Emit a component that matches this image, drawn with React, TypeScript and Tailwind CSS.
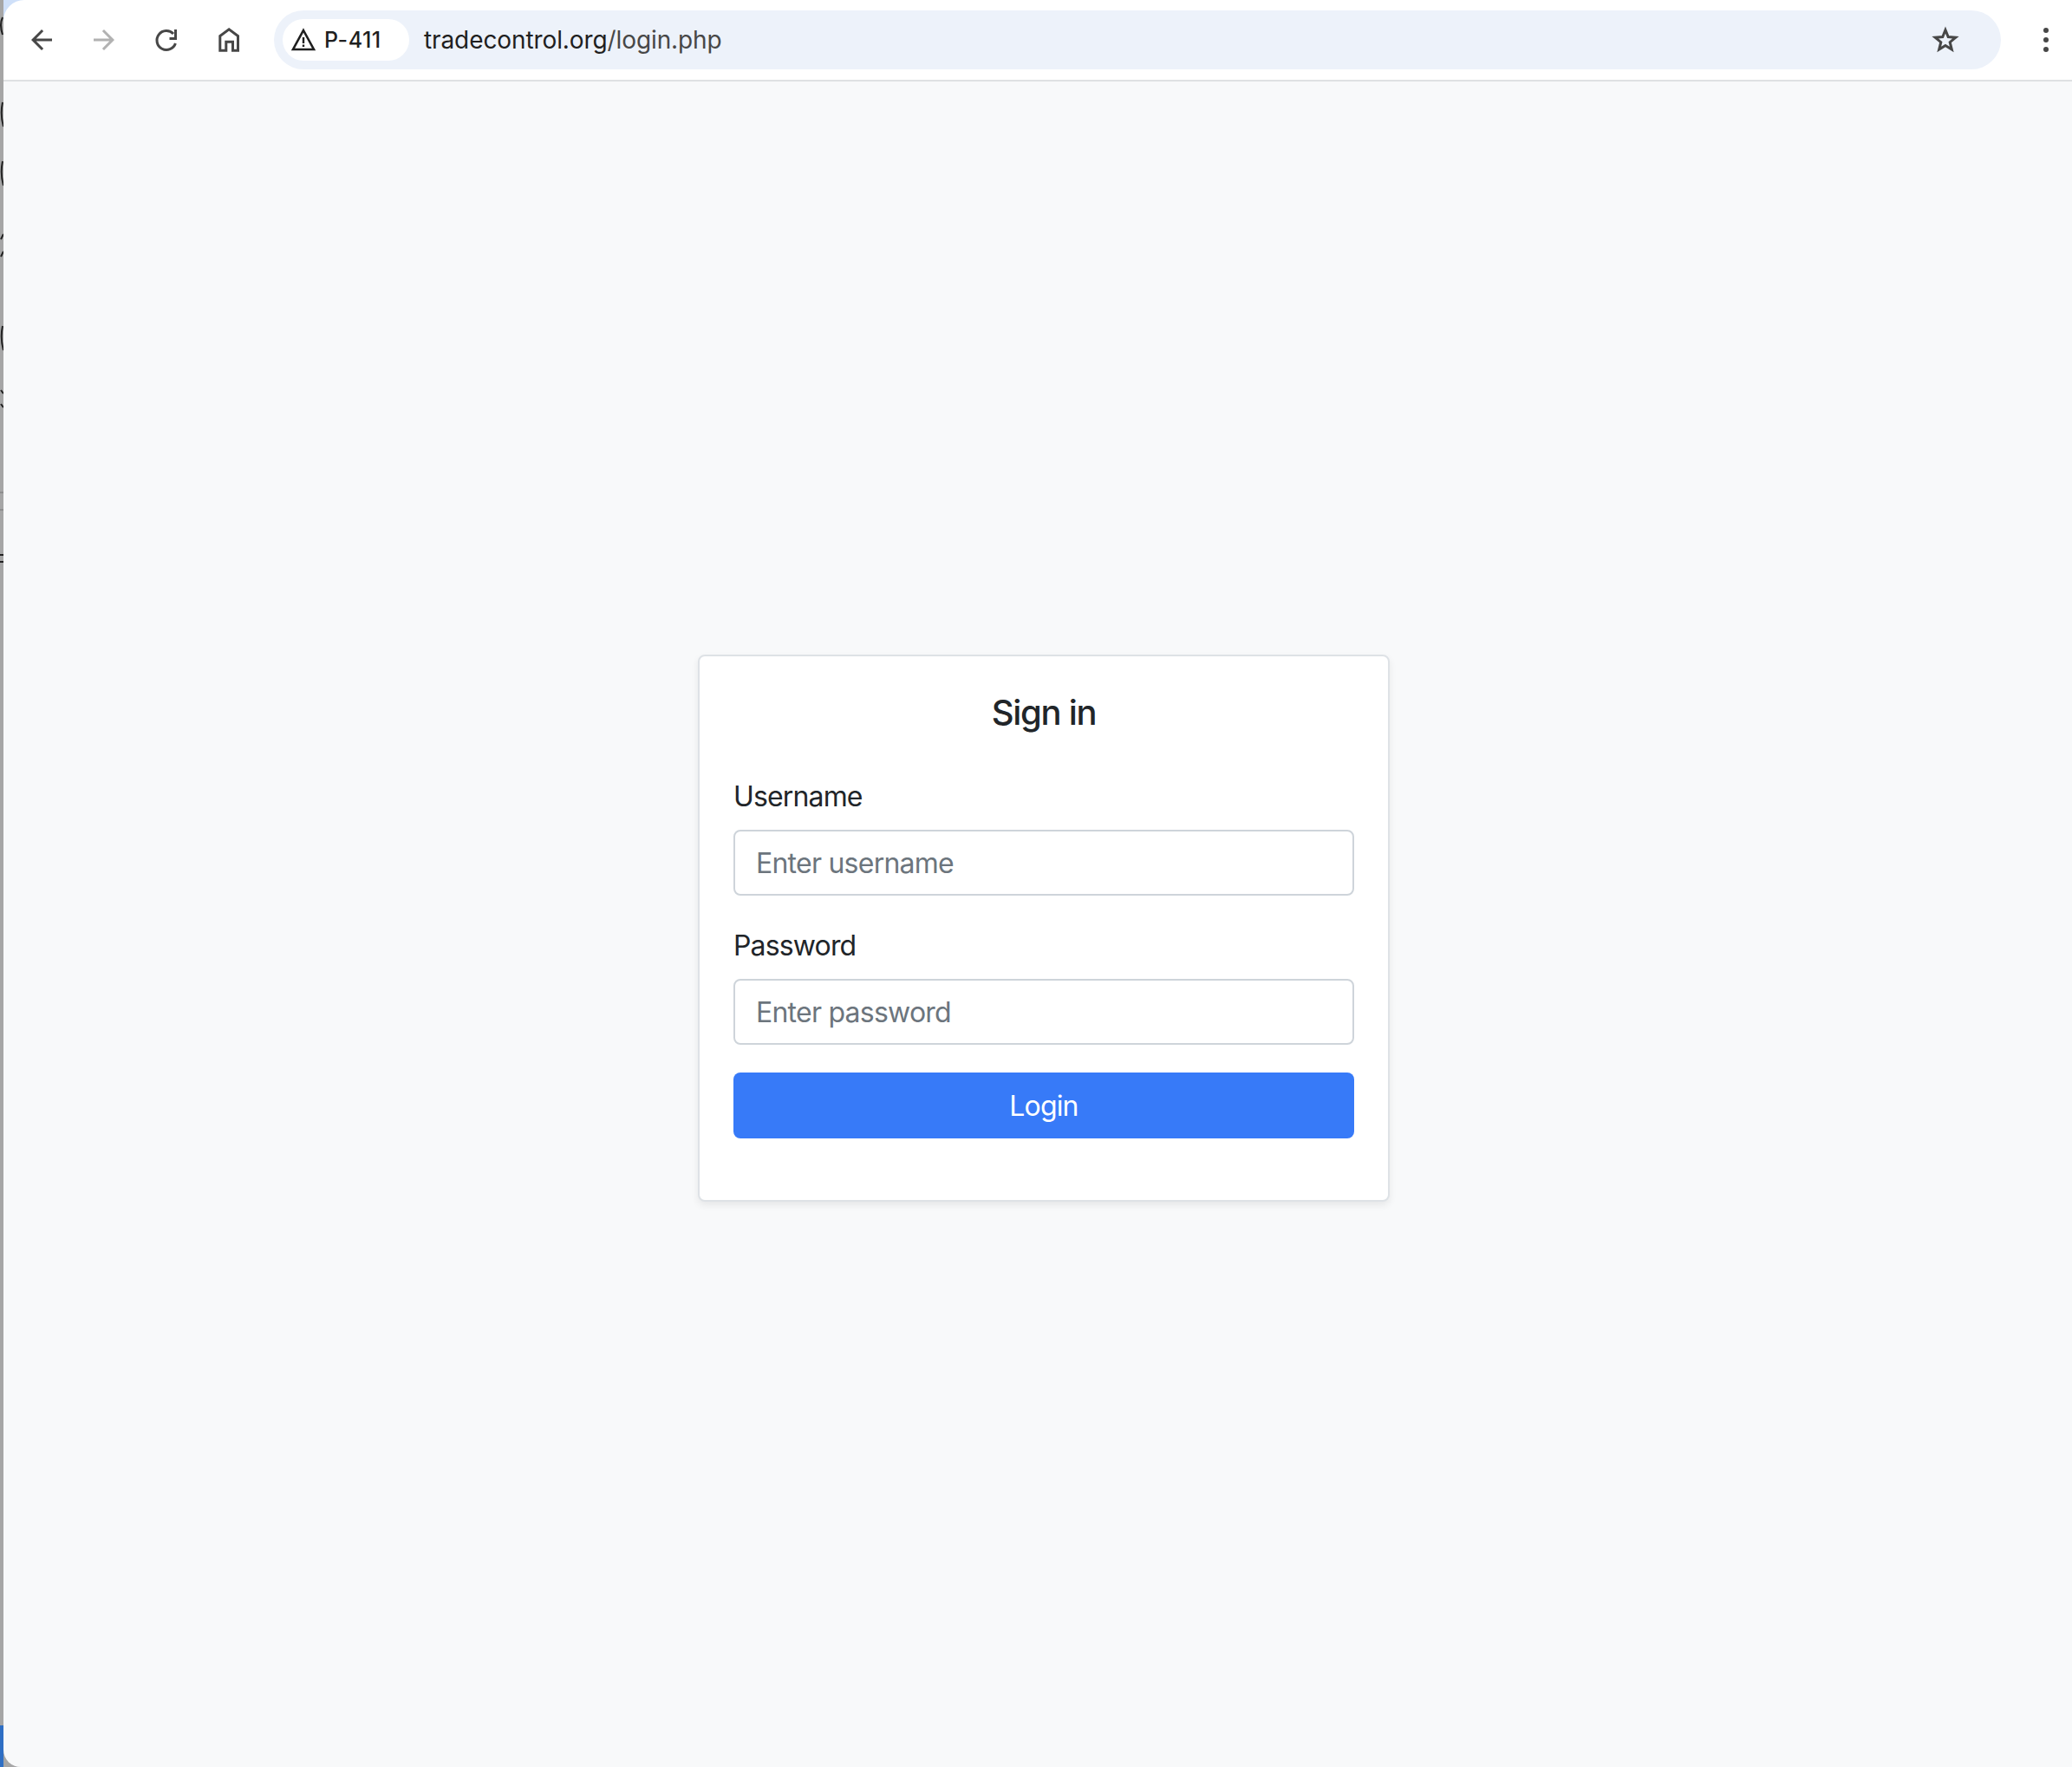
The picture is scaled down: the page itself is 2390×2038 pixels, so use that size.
const inter = "font-[Inter,'Liberation_Sans',sans-serif]";

function BackIcon() {
  return (
    <svg width="36" height="36" viewBox="0 0 24 24" fill="#474747">
      <path d="M20 11H7.83l5.59-5.59L12 4l-8 8 8 8 1.41-1.41L7.83 13H20v-2z" />
    </svg>
  );
}

function ForwardIcon() {
  return (
    <svg width="36" height="36" viewBox="0 0 24 24" fill="#b2b2b2">
      <path d="M4 11h12.17l-5.59-5.59L12 4l8 8-8 8-1.41-1.41L16.17 13H4v-2z" />
    </svg>
  );
}

function ReloadIcon() {
  return (
    <svg width="36" height="36" viewBox="0 0 36 36" fill="none" stroke="#474747" strokeWidth="3">
      <path d="M26 11A11 11 0 1 0 28.4 22" />
      <path d="M28.5 6V16.5H21.5" />
    </svg>
  );
}

function HomeIcon() {
  return (
    <svg width="36" height="36" viewBox="0 0 36 36" fill="none" stroke="#474747" strokeWidth="3">
      <path d="M7.8 30.2V13.5L18.15 5.8L28.5 13.5V30.2H22.5V20.2H14.8V30.2Z" />
    </svg>
  );
}

function WarningIcon() {
  return (
    <svg width="30" height="28" viewBox="0 0 30 28" fill="none">
      <path d="M15 3L27 25H3Z" stroke="#1f1f1f" strokeWidth="2.6" strokeLinejoin="miter" />
      <path d="M13.8 11h2.4v7h-2.4zM13.8 19.5h2.4v2.4h-2.4z" fill="#1f1f1f" />
    </svg>
  );
}

function StarIcon() {
  return (
    <svg width="32" height="32" viewBox="0 0 32 32" fill="none" stroke="#474747" strokeWidth="3">
      <path d="M16 4.5L19.2 12.6L27.8 13.2L21.2 18.7L23.3 27.1L16 22.5L8.7 27.1L10.8 18.7L4.2 13.2L12.8 12.6Z" />
    </svg>
  );
}

function Toolbar() {
  return (
    <div className="shrink-0 bg-[#cfe0f9]">
      <header className="flex h-[94px] items-center rounded-tl-[24px] border-b-2 border-[#dfe1e3] bg-white pl-[26px]">
        <div className="flex items-center gap-[36px]">
          <BackIcon />
          <ForwardIcon />
          <ReloadIcon />
          <HomeIcon />
        </div>
        <div className="ml-[34px] flex h-[68px] w-[1992px] items-center rounded-full bg-[#edf2fa] pl-[10px] pr-[48px]">
          <div className="flex h-[48px] w-[146px] items-center gap-[9px] rounded-full bg-white pl-[9px]">
            <WarningIcon />
            <span className="pt-[2px] text-[25px] font-medium tracking-[0.5px] text-[#1f1f1f]">P-411</span>
          </div>
          <div className="ml-[17px] flex-1 text-[28px] tracking-[-0.1px] text-[#1f1f1f]">
            tradecontrol.org<span className="text-[#474747]">/login.php</span>
          </div>
          <StarIcon />
        </div>
        <div className="ml-[49px] flex flex-col gap-[5px]">
          <span className="size-[6px] rounded-full bg-[#474747]" />
          <span className="size-[6px] rounded-full bg-[#474747]" />
          <span className="size-[6px] rounded-full bg-[#474747]" />
        </div>
      </header>
    </div>
  );
}

function Field({ label, placeholder, type }: { label: string; placeholder: string; type: string }) {
  return (
    <div className="mb-[32px]">
      <label className="mb-[14px] block pt-[2px] text-[32px] leading-[48px] tracking-[-0.85px] text-[#212529]">{label}</label>
      <input
        type={type}
        placeholder={placeholder}
        className="block h-[76px] w-full rounded-[8px] border-2 border-[#ced4da] bg-white px-[24px] text-[32px] tracking-[-0.76px] text-[#212529] placeholder:text-[#6c757d]"
      />
    </div>
  );
}

export default function App() {
  return (
    <div className={`${inter} flex h-screen bg-[#a6a6a6]`}>
      <svg width="4" height="2038" viewBox="0 0 4 2038" className="shrink-0" fill="none" stroke="#222" strokeWidth="2">
        <path d="M3 20q-4 8 0 20M3 118q-3 14 1 28M3 186q-3 14 1 28M1 276l3-6M1 296l3-6M3 376q-3 14 1 28M1 450l3 4M1 466l3 4" />
        <path d="M0 568h4M0 588h4" stroke="#777" strokeWidth="1" />
        <path d="M0 640h4M0 648h4" />
        <rect x="0" y="1990" width="4" height="48" fill="#2f6fc4" stroke="none" />
      </svg>
      <div className="flex min-w-0 flex-1 flex-col">
        <Toolbar />
        <main className="flex flex-1 items-center justify-center rounded-bl-[20px] bg-[#f8f9fa] pl-[14px] pt-[9px]">
          <div className="w-[798px] rounded-[8px] border-2 border-[#dee2e6] bg-white px-[39px] pb-[71px] pt-[41px] shadow-[0_4px_8px_rgba(0,0,0,0.075)]">
            <h4 className="mb-[47px] text-center text-[40px] font-medium leading-[48px] tracking-[-1.3px] text-[#212529]">Sign in</h4>
            <Field label="Username" placeholder="Enter username" type="text" />
            <Field label="Password" placeholder="Enter password" type="password" />
            <button className="block h-[76px] w-full rounded-[8px] bg-[#377af8] pt-[2px] text-[32px] tracking-[-0.85px] text-white">Login</button>
          </div>
        </main>
      </div>
    </div>
  );
}
